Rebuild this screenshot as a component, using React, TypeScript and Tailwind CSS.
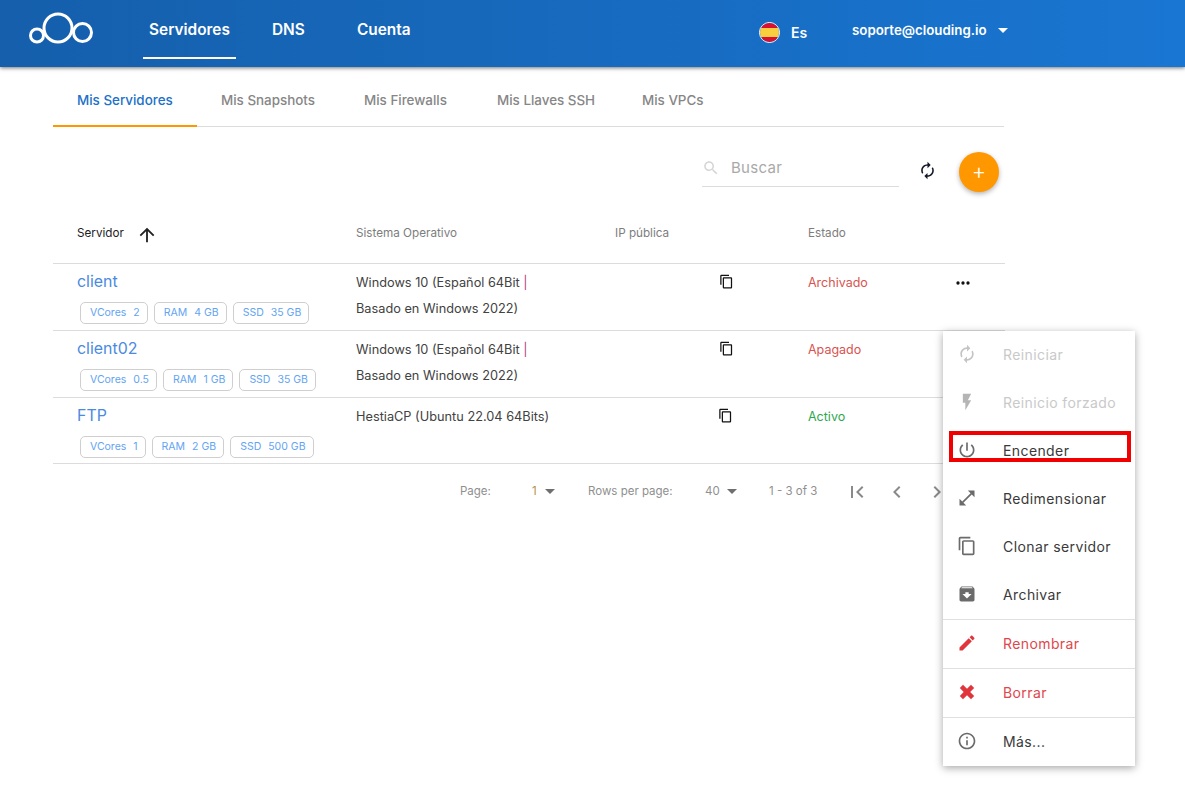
import React from 'react';

const P = {
  renew: 'M12 6v3l4-4-4-4v3c-4.42 0-8 3.58-8 8 0 1.57.46 3.03 1.24 4.26L6.7 14.8c-.45-.83-.7-1.79-.7-2.8 0-3.31 2.69-6 6-6zm6.76 1.74L17.3 9.2c.44.84.7 1.79.7 2.8 0 3.31-2.69 6-6 6v-3l-4 4 4 4v-3c4.42 0 8-3.58 8-8 0-1.57-.46-3.03-1.24-4.26z',
  flash: 'M7 2v11h3v9l7-12h-4l4-8z',
  power: 'M13 3h-2v10h2V3zm4.83 2.17l-1.42 1.42C17.99 7.86 19 9.81 19 12c0 3.87-3.13 7-7 7s-7-3.13-7-7c0-2.19 1.01-4.14 2.58-5.42L6.17 5.17C4.23 6.82 3 9.26 3 12c0 4.97 4.03 9 9 9s9-4.03 9-9c0-2.74-1.23-5.18-3.17-6.83z',
  copy: 'M16 1H4c-1.1 0-2 .9-2 2v14h2V3h12V1zm3 4H8c-1.1 0-2 .9-2 2v14c0 1.1.9 2 2 2h11c1.1 0 2-.9 2-2V7c0-1.1-.9-2-2-2zm0 16H8V7h11v14z',
  resize: 'M21 11V3h-8l3.29 3.29-10 10L3 13v8h8l-3.29-3.29 10-10z',
  archive: 'M20.54 5.23l-1.39-1.68C18.88 3.21 18.47 3 18 3H6c-.47 0-.88.21-1.16.55L3.46 5.23C3.17 5.57 3 6.02 3 6.5V19c0 1.1.9 2 2 2h14c1.1 0 2-.9 2-2V6.5c0-.48-.17-.93-.46-1.27zM12 17.5L6.5 12H10v-2h4v2h3.5L12 17.5zM5.12 5l.81-1h12l.94 1H5.12z',
  edit: 'M3 17.25V21h3.75L17.81 9.94l-3.75-3.75L3 17.25zM20.71 7.04c.39-.39.39-1.02 0-1.41l-2.34-2.34c-.39-.39-1.02-.39-1.41 0l-1.83 1.83 3.75 3.75 1.83-1.83z',
  close: 'M7.2 3.4 12 8.2l4.8-4.8 3.8 3.8-4.8 4.8 4.8 4.8-3.8 3.8-4.8-4.8-4.8 4.8-3.8-3.8L8 12 3.4 7.2z',
  info: 'M11 7h2v2h-2zm0 4h2v6h-2zm1-9C6.48 2 2 6.48 2 12s4.48 10 10 10 10-4.48 10-10S17.52 2 12 2zm0 18c-4.41 0-8-3.59-8-8s3.59-8 8-8 8 3.59 8 8-3.59 8-8 8z',
  first: 'M18.41 16.59L13.82 12l4.59-4.59L17 6l-6 6 6 6zM6 6h2v12H6z',
  prev: 'M15.41 7.41L14 6l-6 6 6 6 1.41-1.41L10.83 12z',
  next: 'M10 6L8.59 7.41 13.17 12l-4.58 4.59L10 18l6-6z',
  up: 'M4 12l1.41 1.41L11 7.83V20h2V7.83l5.58 5.59L20 12l-8-8-8 8z',
  search: 'M15.5 14h-.79l-.28-.27C15.41 12.59 16 11.11 16 9.5 16 5.91 13.09 3 9.5 3S3 5.91 3 9.5 5.91 16 9.5 16c1.61 0 3.09-.59 4.23-1.57l.27.28v.79l5 4.99L20.49 19l-4.99-5zm-6 0C7.01 14 5 11.99 5 9.5S7.01 5 9.5 5 14 7.01 14 9.5 11.99 14 9.5 14z',
  dots: 'M6 10a2 2 0 1 0 0 4 2 2 0 0 0 0-4zm12 0a2 2 0 1 0 0 4 2 2 0 0 0 0-4zm-6 0a2 2 0 1 0 0 4 2 2 0 0 0 0-4z',
};

function Icon({ d, className }: { d: string; className: string }) {
  return (
    <svg viewBox="0 0 24 24" fill="currentColor" className={className}>
      <path d={d} />
    </svg>
  );
}

function Caret({ className }: { className: string }) {
  return <span className={`inline-block w-0 h-0 border-x-[5px] border-x-transparent border-t-[5px] ${className}`} />;
}

function Logo() {
  return (
    <svg width="66" height="36" viewBox="0 -2 66 36" fill="none" stroke="white" strokeWidth="3">
      <circle cx="8" cy="21.5" r="6.5" />
      <circle cx="29" cy="14" r="14" />
      <circle cx="53.5" cy="18.5" r="9" />
    </svg>
  );
}

function Flag() {
  return (
    <span className="w-[21px] h-[21px] rounded-full border border-white overflow-hidden flex flex-col">
      <span className="h-[5px] bg-[#d9102f]" />
      <span className="flex-1 bg-[#f9cf3f]" />
      <span className="h-[5px] bg-[#d9102f]" />
    </span>
  );
}

const tabs = [
  { label: 'Mis Servidores', active: true, w: 'w-[144px]' },
  { label: 'Mis Snapshots', active: false, w: 'w-[143px]' },
  { label: 'Mis Firewalls', active: false, w: 'w-[133px]' },
  { label: 'Mis Llaves SSH', active: false, w: 'w-[145px]' },
  { label: 'Mis VPCs', active: false, w: 'w-[108px]' },
];

const servers = [
  {
    name: 'client', os: ['Windows 10 (Español 64Bit ', 'Basado en Windows 2022)'], status: 'Archivado', tone: 'text-[#d9534f]', copy: 'ml-[104px]', h: 'h-[67px]',
    chips: [['VCores', '2'], ['RAM', '4 GB'], ['SSD', '35 GB']], dots: true,
  },
  {
    name: 'client02', os: ['Windows 10 (Español 64Bit ', 'Basado en Windows 2022)'], status: 'Apagado', tone: 'text-[#d9534f]', copy: 'ml-[104px]', h: 'h-[67px]',
    chips: [['VCores', '0.5'], ['RAM', '1 GB'], ['SSD', '35 GB']], dots: false,
  },
  {
    name: 'FTP', os: ['HestiaCP (Ubuntu 22.04 64Bits)'], status: 'Activo', tone: 'text-[#2ea84f]', copy: 'ml-[103px]', h: 'h-[66px]',
    chips: [['VCores', '1'], ['RAM', '2 GB'], ['SSD', '500 GB']], dots: false,
  },
];

const menu = [
  { label: 'Reiniciar', d: P.renew, text: 'text-[#c9c9c9]', icon: 'text-[#c4c4c4]', h: 'h-[48px]' },
  { label: 'Reinicio forzado', d: P.flash, text: 'text-[#c9c9c9]', icon: 'text-[#b5b5b5]', h: 'h-[48px]' },
  { label: 'Encender', d: P.power, text: 'text-[#3a3a3a]', icon: 'text-[#6b6b6b]', h: 'h-[48px]' },
  { label: 'Redimensionar', d: P.resize, text: 'text-[#3a3a3a]', icon: 'text-[#6b6b6b]', h: 'h-[48px]' },
  { label: 'Clonar servidor', d: P.copy, text: 'text-[#3a3a3a]', icon: 'text-[#6b6b6b]', h: 'h-[48px]' },
  { label: 'Archivar', d: P.archive, text: 'text-[#3a3a3a]', icon: 'text-[#6b6b6b]', h: 'h-[49px] border-b border-[#e0e0e0]' },
  { label: 'Renombrar', d: P.edit, text: 'text-[#e0474c]', icon: 'text-[#e0353b]', h: 'h-[49px] border-b border-[#e0e0e0]' },
  { label: 'Borrar', d: P.close, text: 'text-[#e0474c]', icon: 'text-[#e0353b]', h: 'h-[49px] border-b border-[#e0e0e0]' },
  { label: 'Más...', d: P.info, text: 'text-[#3a3a3a]', icon: 'text-[#6b6b6b]', h: 'h-[48px]' },
];

export default function App() {
  return (
    <div className="relative h-[793px] overflow-hidden bg-white font-['Inter',sans-serif]">
      {/* Top bar */}
      <header className="h-[67px] flex items-center pb-[7px] bg-gradient-to-r from-[#155fac] to-[#1976d2] shadow-[0_1px_4px_rgba(0,0,0,0.55)] text-white">
        <div className="ml-[29px] mt-[-1px]"><Logo /></div>
        <nav className="ml-[48px] flex items-center font-semibold text-[15.4px]">
          <div className="w-[93px] h-[51px] mt-[7px] pb-[6px] flex items-center justify-center border-b-2 border-white">Servidores</div>
          <div className="ml-[36px] w-[36px]">DNS</div>
          <div className="ml-[49px] w-[53px] whitespace-nowrap">Cuenta</div>
        </nav>
        <div className="ml-[349px] mt-[5px] flex items-center"><Flag /></div>
        <div className="ml-[11px] w-[16px] text-[14px] font-semibold mt-[5px]">Es</div>
        <div className="ml-[45px] w-[135px] text-[13.3px] font-semibold mt-[1px] whitespace-nowrap">soporte@clouding.io</div>
        <Caret className="ml-[11px] border-t-white" />
      </header>

      <main className="ml-[53px] w-[951px]">
        {/* Tabs */}
        <div className="flex h-[60px] border-b border-[#dcdcdc]">
          {tabs.map((t) => (
            <div key={t.label} className={`${t.w} h-[60px] flex items-center pl-[24px] text-[13.4px] font-medium ${t.active ? 'pt-[9px] text-[#2170c9] border-b-2 border-[#ff9800]' : 'pt-[7px] text-[#868686]'}`}>
              {t.label}
            </div>
          ))}
        </div>

        {/* Search and actions */}
        <div className="h-[90px] flex items-start pt-[25px]">
          <div className="ml-[649px] w-[197px] h-[35px] border-b border-[#dcdcdc] flex items-center pb-[2px]">
            <Icon d={P.search} className="w-[18px] h-[18px] text-[#d5d5d5]" />
            <span className="ml-[11px] text-[15px] tracking-[0.3px] text-[#a9a9a9]">Buscar</span>
          </div>
          <Icon d={P.renew} className="ml-[19px] mt-[9px] w-[19px] h-[19px] text-[#111827]" />
          <button className="ml-[22px] w-[40px] h-[40px] pb-[2px] rounded-full bg-[#ff9800] shadow-[0_2px_5px_rgba(0,0,0,0.3)] flex items-center justify-center text-white text-[22px] font-light leading-none">+</button>
        </div>
      </main>

      <section className="ml-[53px] w-[952px]">
        {/* Table head */}
        <div className="h-[47px] border-b border-[#dcdcdc] flex text-[11.7px] text-[#7d7d7d]">
          <div className="w-[303px] pl-[24px] pt-[7px] flex items-start text-[#222]">
            <span className="pt-[1px]">Servidor</span>
            <Icon d={P.up} className="ml-[12px] w-[22px] h-[22px] text-[#222]" />
          </div>
          <div className="w-[259px] pt-[8px]">Sistema Operativo</div>
          <div className="w-[193px] pt-[8px]">IP pública</div>
          <div className="pt-[8px]">Estado</div>
        </div>

        {/* Rows */}
        {servers.map((s) => (
          <div key={s.name} className={`${s.h} border-b border-[#dcdcdc] flex`}>
            <div className="w-[303px] pl-[24px] pt-[8px]">
              <div className="text-[15.9px] leading-[20px] text-[#4a8ae0]">{s.name}</div>
              <div className="ml-[3px] mt-[10px] flex gap-[6px]">
                {s.chips.map(([k, v]) => (
                  <span key={k} className="h-[22px] pl-[9px] pr-[7px] pb-[1px] border border-[#cfcfcf] rounded-[5px] flex items-center gap-[7px] text-[10.5px] text-[#63a4f2] whitespace-nowrap">
                    <span>{k}</span>
                    <span>{v}</span>
                  </span>
                ))}
              </div>
            </div>
            <div className="w-[259px] pt-[6px] text-[12.75px] leading-[26px] text-[#424242]">
              <div>{s.os[0]}{s.os[1] && <span className="text-[#b0407a]">|</span>}</div>
              {s.os[1] && <div>{s.os[1]}</div>}
            </div>
            <div className="w-[193px] pt-[10px]">
              <Icon d={P.copy} className={`${s.copy} w-[15px] h-[15px] text-[#111]`} />
            </div>
            <div className={`w-[135px] pt-[6px] text-[12.5px] leading-[26px] ${s.tone}`}>{s.status}</div>
            {s.dots && <Icon d={P.dots} className="ml-[10px] mt-[9px] w-[20px] h-[20px] text-[#111]" />}
          </div>
        ))}

        {/* Pagination */}
        <div className="h-[55px] flex items-center text-[11.5px] text-[#8f8f8f]">
          <span className="ml-[407px] w-[32px]">Page:</span>
          <span className="ml-[40px] w-[5px] text-[#b58f4a]">1</span>
          <Caret className="ml-[8px] border-t-[#6f6f6f]" />
          <span className="ml-[33px] w-[85px] whitespace-nowrap">Rows per page:</span>
          <span className="ml-[32px] w-[14px]">40</span>
          <Caret className="ml-[8px] border-t-[#6f6f6f]" />
          <span className="ml-[32px] w-[49px] whitespace-nowrap">1 - 3 of 3</span>
          <Icon d={P.first} className="ml-[27px] w-[24px] h-[24px] text-[#8a8a8a]" />
          <Icon d={P.prev} className="ml-[16px] w-[24px] h-[24px] text-[#8a8a8a]" />
          <Icon d={P.next} className="ml-[16px] w-[24px] h-[24px] text-[#8a8a8a]" />
        </div>
      </section>

      {/* Row actions menu */}
      <div className="absolute left-[943px] top-[331px] w-[192px] bg-white shadow-[0_2px_8px_rgba(0,0,0,0.35)]">
        {menu.map((m) => (
          <div key={m.label} className={`${m.h} flex items-center pl-[14px] pb-[2px] text-[14px] tracking-[0.4px] ${m.text}`}>
            <Icon d={m.d} className={`w-[20px] h-[20px] ${m.icon}`} />
            <span className="ml-[26px]">{m.label}</span>
          </div>
        ))}
      </div>

      {/* Highlight drawn over the menu */}
      <div className="absolute left-[949px] top-[431px] w-[182px] h-[31px] border-4 border-[#f00000]" />
    </div>
  );
}
